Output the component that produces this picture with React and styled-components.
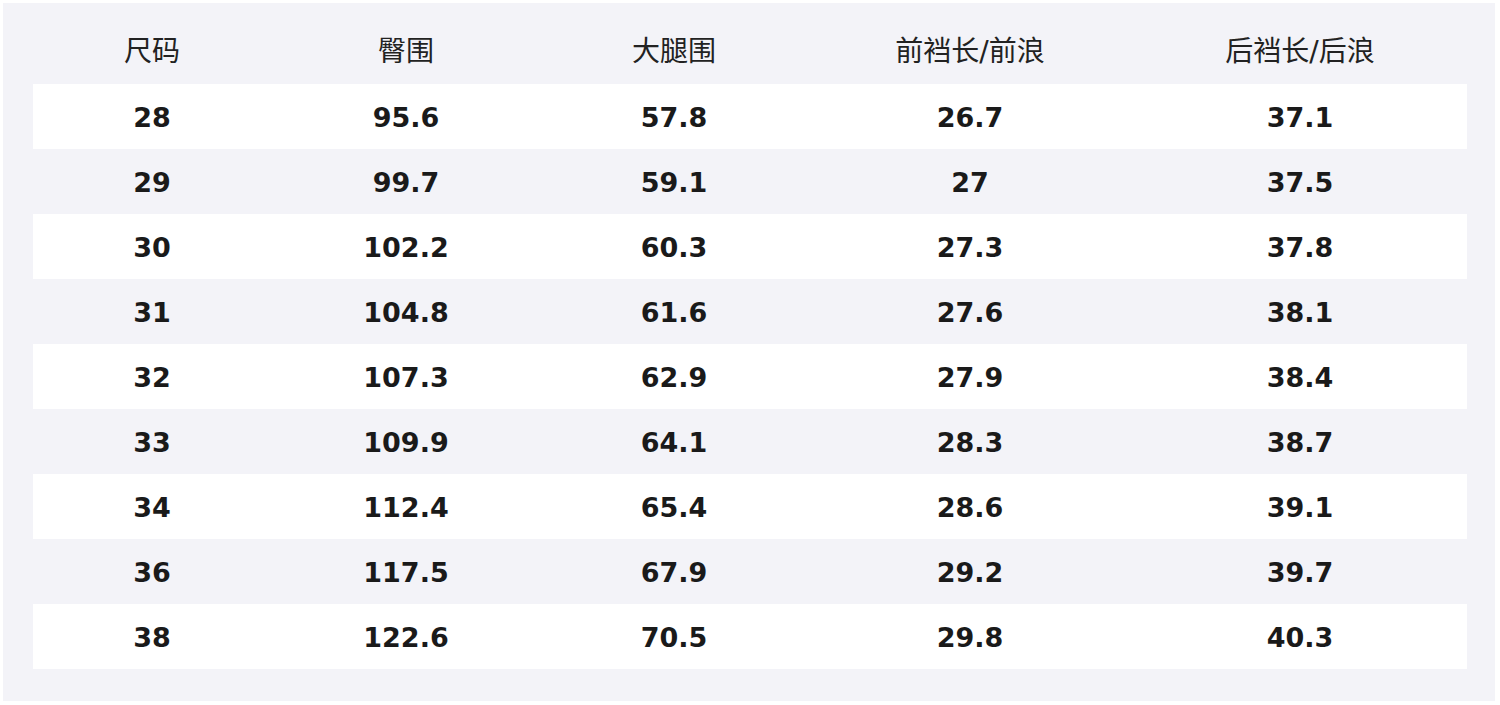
import React from 'react';
import styled, { createGlobalStyle } from 'styled-components';

const GlobalStyle = createGlobalStyle`
  html, body {
    margin: 0;
    padding: 0;
    background: #ffffff;
  }
  body {
    font-family: "DejaVu Sans", "Noto Sans CJK SC", sans-serif;
  }
`;

const columns = ['尺码', '臀围', '大腿围', '前裆长/前浪', '后裆长/后浪'];

const rows = [
  ['28', '95.6', '57.8', '26.7', '37.1'],
  ['29', '99.7', '59.1', '27', '37.5'],
  ['30', '102.2', '60.3', '27.3', '37.8'],
  ['31', '104.8', '61.6', '27.6', '38.1'],
  ['32', '107.3', '62.9', '27.9', '38.4'],
  ['33', '109.9', '64.1', '28.3', '38.7'],
  ['34', '112.4', '65.4', '28.6', '39.1'],
  ['36', '117.5', '67.9', '29.2', '39.7'],
  ['38', '122.6', '70.5', '29.8', '40.3'],
];

const Panel = styled.div`
  box-sizing: border-box;
  width: 1492px;
  height: 698px;
  margin: 3px 0 0 3px;
  padding: 16px 28px 32px 30px;
  background: #f3f3f8;
`;

const Table = styled.div`
  display: flex;
  flex-direction: column;
  width: 1434px;
`;

const Row = styled.div`
  display: grid;
  grid-template-columns: 238px 270px 266px 326px 334px;
  height: 65px;
  align-items: center;
  background: ${(p) => (p.$striped ? '#ffffff' : 'transparent')};
`;

const HeadCell = styled.div`
  text-align: center;
  font-size: 28px;
  font-weight: 400;
  color: #222222;
  line-height: 1;
`;

const Cell = styled.div`
  text-align: center;
  font-size: 27px;
  font-weight: 700;
  color: #1a1a1a;
  line-height: 1;
  padding-top: 2px;
`;

export default function App() {
  return (
    <>
      <GlobalStyle />
      <Panel>
        <Table>
          <Row>
            {columns.map((c) => (
              <HeadCell key={c}>{c}</HeadCell>
            ))}
          </Row>
          {rows.map((r, i) => (
            <Row key={r[0]} $striped={i % 2 === 0}>
              {r.map((v, j) => (
                <Cell key={j}>{v}</Cell>
              ))}
            </Row>
          ))}
        </Table>
      </Panel>
    </>
  );
}
